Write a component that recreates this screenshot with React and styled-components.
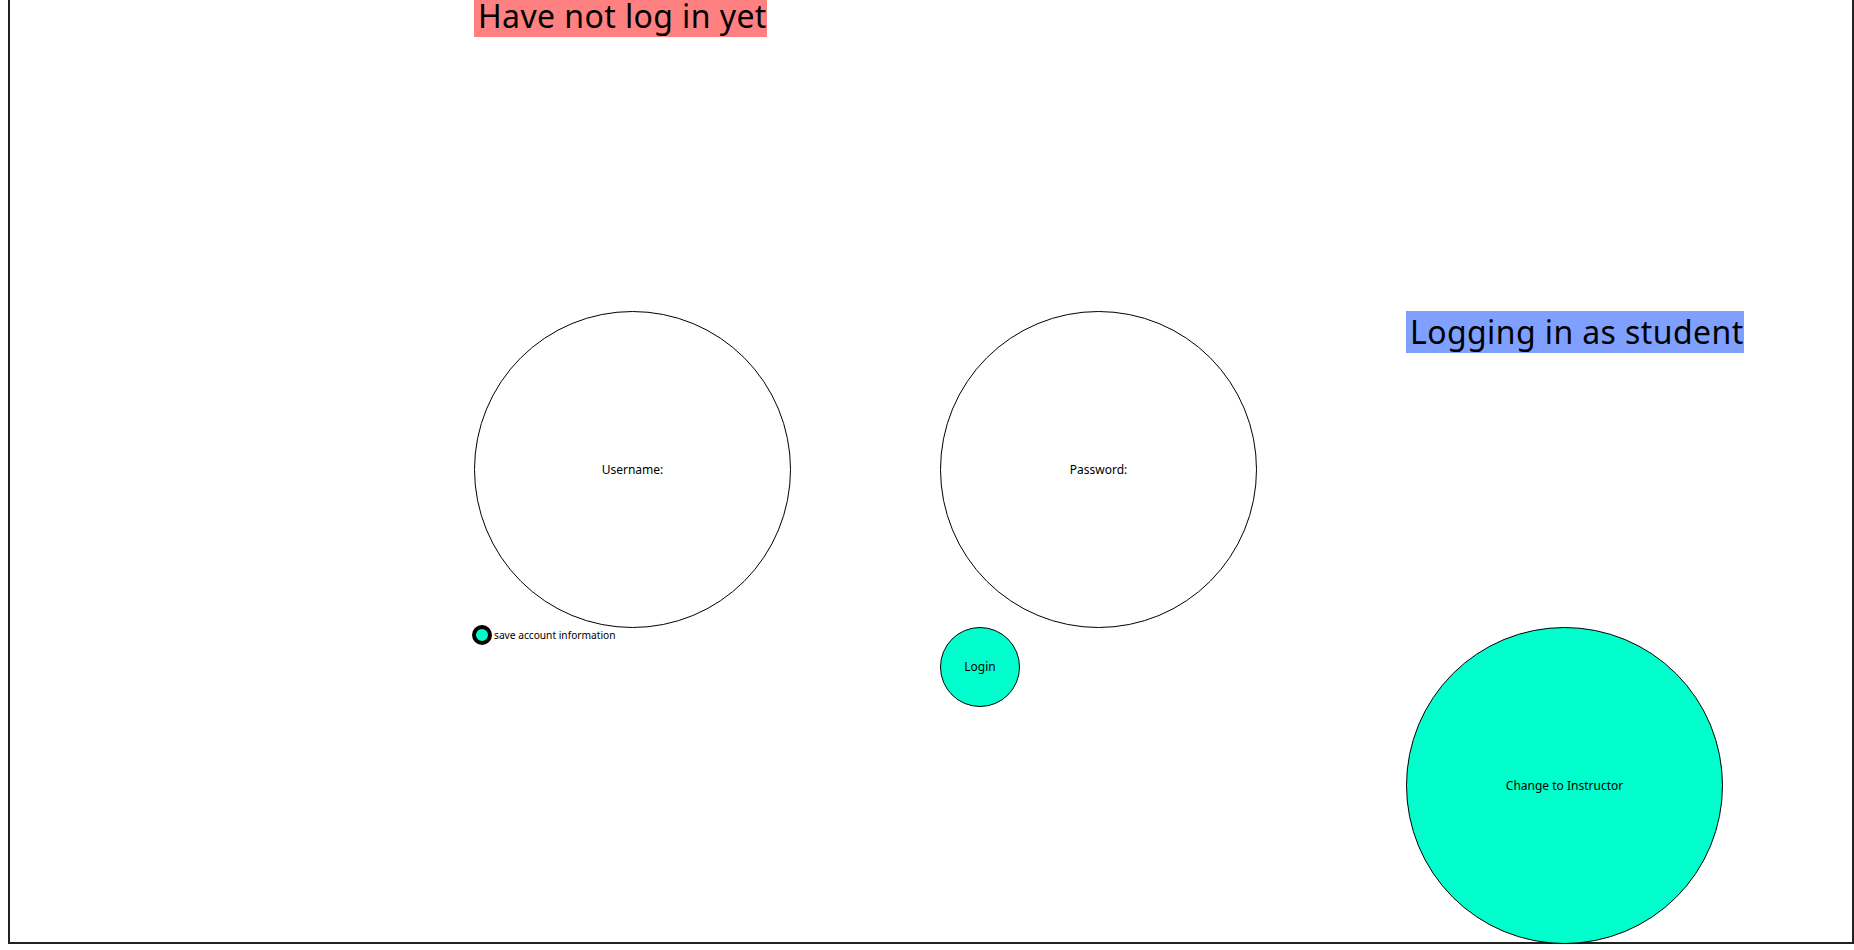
import React from "react";
import styled, { createGlobalStyle } from "styled-components";

const GlobalStyle = createGlobalStyle`
  html, body {
    background: #ffffff;
  }
  body {
    margin: 0 0 8px 8px;
    font-family: "Noto Sans", "Open Sans", sans-serif;
    color: #000;
  }
`;

const Frame = styled.div`
  margin-top: -5px;
  box-sizing: border-box;
  border: 2px solid #222;
  border-top: none;
  display: grid;
  grid-template-columns: 464px 466px 466px 1fr;
  grid-template-rows: 316px 316px 315px;
`;

const Cell = styled.div`
  grid-column: ${(p) => p.$col};
  grid-row: ${(p) => p.$row};
  display: flex;
  align-items: flex-start;
  justify-content: flex-start;
  min-width: 0;
`;

const Banner = styled.div`
  background: ${(p) => p.$bg};
  font-size: 32px;
  line-height: 42px;
  padding: 0 0 0 4px;
  white-space: nowrap;
  letter-spacing: 0.4px;
`;

const Circle = styled.div`
  box-sizing: border-box;
  width: ${(p) => p.$size}px;
  height: ${(p) => p.$size}px;
  border-radius: 50%;
  border: 1px solid #000;
  background: ${(p) => p.$fill || "#fff"};
  display: flex;
  align-items: center;
  justify-content: center;
  font-size: 12px;
  line-height: 16px;
  white-space: nowrap;
  flex-shrink: 0;
`;

const CheckRow = styled.label`
  display: flex;
  align-items: center;
  gap: 2px;
  margin-top: -2px;
  margin-left: -2px;
  font-size: 10.2px;
  line-height: 20px;
`;

const Dot = styled.span`
  box-sizing: border-box;
  width: 20px;
  height: 20px;
  border-radius: 50%;
  border: 4.5px solid #000;
  background: #00ffcc;
  flex-shrink: 0;
`;

export default function App() {
  return (
    <>
      <GlobalStyle />
      <Frame>
        <Cell $col={2} $row={1}>
          <Banner $bg="#ff8080">Have not log in yet</Banner>
        </Cell>
        <Cell $col={2} $row={2}>
          <Circle $size={317}>Username:</Circle>
        </Cell>
        <Cell $col={3} $row={2}>
          <Circle $size={317}>Password:</Circle>
        </Cell>
        <Cell $col={4} $row={2}>
          <Banner $bg="#80a0ff">Logging in as student</Banner>
        </Cell>
        <Cell $col={2} $row={3}>
          <CheckRow>
            <Dot />
            save account information
          </CheckRow>
        </Cell>
        <Cell $col={3} $row={3}>
          <Circle $size={80} $fill="#00ffcc">Login</Circle>
        </Cell>
        <Cell $col={4} $row={3}>
          <Circle $size={317} $fill="#00ffcc">Change to Instructor</Circle>
        </Cell>
      </Frame>
    </>
  );
}
